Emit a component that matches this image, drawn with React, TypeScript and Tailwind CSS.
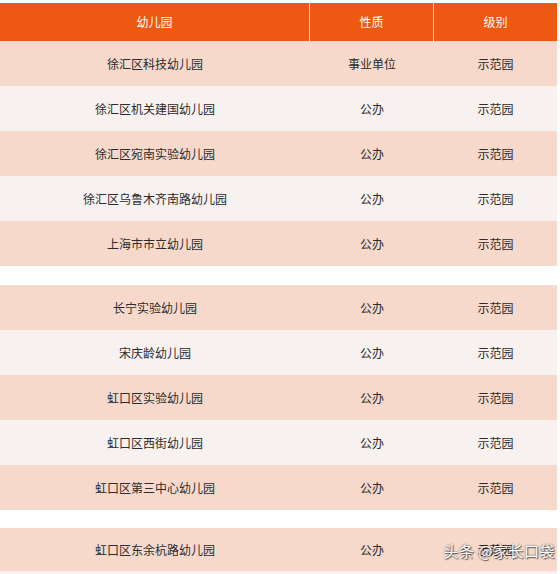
const groups: [string, string][][] = [
  [
    ['徐汇区科技幼儿园', '事业单位'],
    ['徐汇区机关建国幼儿园', '公办'],
    ['徐汇区宛南实验幼儿园', '公办'],
    ['徐汇区乌鲁木齐南路幼儿园', '公办'],
    ['上海市市立幼儿园', '公办'],
  ],
  [
    ['长宁实验幼儿园', '公办'],
    ['宋庆龄幼儿园', '公办'],
    ['虹口区实验幼儿园', '公办'],
    ['虹口区西街幼儿园', '公办'],
    ['虹口区第三中心幼儿园', '公办'],
  ],
  [
    ['虹口区东余杭路幼儿园', '公办'],
    ['', ''],
  ],
];

const cols = 'grid grid-cols-[310px_124px_123px]';

function Row({ name, kind, odd, short }: { name: string; kind: string; odd: boolean; short?: boolean }) {
  return (
    <div
      className={`${cols} ${short ? 'h-[43px]' : 'h-[45px]'} items-center text-[12px] text-[#2b2b2b] ${
        odd ? 'bg-[#f7f2ef]' : 'bg-[#f6d9cb]'
      }`}
    >
      <div className="text-center">{name}</div>
      <div className="text-center">{kind}</div>
      <div className="text-center">{name ? '示范园' : ''}</div>
    </div>
  );
}

export default function App() {
  return (
    <div
      className="relative h-[574px] w-[560px] overflow-hidden bg-white"
      style={{ fontFamily: '"Microsoft YaHei", "Noto Sans CJK SC", sans-serif' }}
    >
      <div className="w-[557px] pt-[3px]">
        {/* Header */}
        <div className={`${cols} h-[38px] items-center bg-[#ed5912] text-[12px] text-white`}>
          <div className="flex h-full items-center justify-center border-r border-[#f8e6d8]">幼儿园</div>
          <div className="flex h-full items-center justify-center border-r border-[#f8e6d8]">性质</div>
          <div className="flex h-full items-center justify-center">级别</div>
        </div>

        <div className="flex flex-col">
          {groups.map((rows, g) => (
            <div key={g} className={g === 0 ? '' : g === 1 ? 'mt-[19px]' : 'mt-[18px]'}>
              {rows.map(([name, kind], i) => (
                <Row key={i} name={name} kind={kind} odd={i % 2 === 1} short={g === 2 && i === 0} />
              ))}
            </div>
          ))}
        </div>
      </div>

      {/* Watermark */}
      <div
        className="absolute right-[5px] top-[540px] text-[15px] tracking-[0.5px] text-white"
        style={{ textShadow: '0 0 2px rgba(0,0,0,0.75), 1px 1px 1px rgba(0,0,0,0.5)' }}
      >
        头条 @家长口袋
      </div>
    </div>
  );
}
